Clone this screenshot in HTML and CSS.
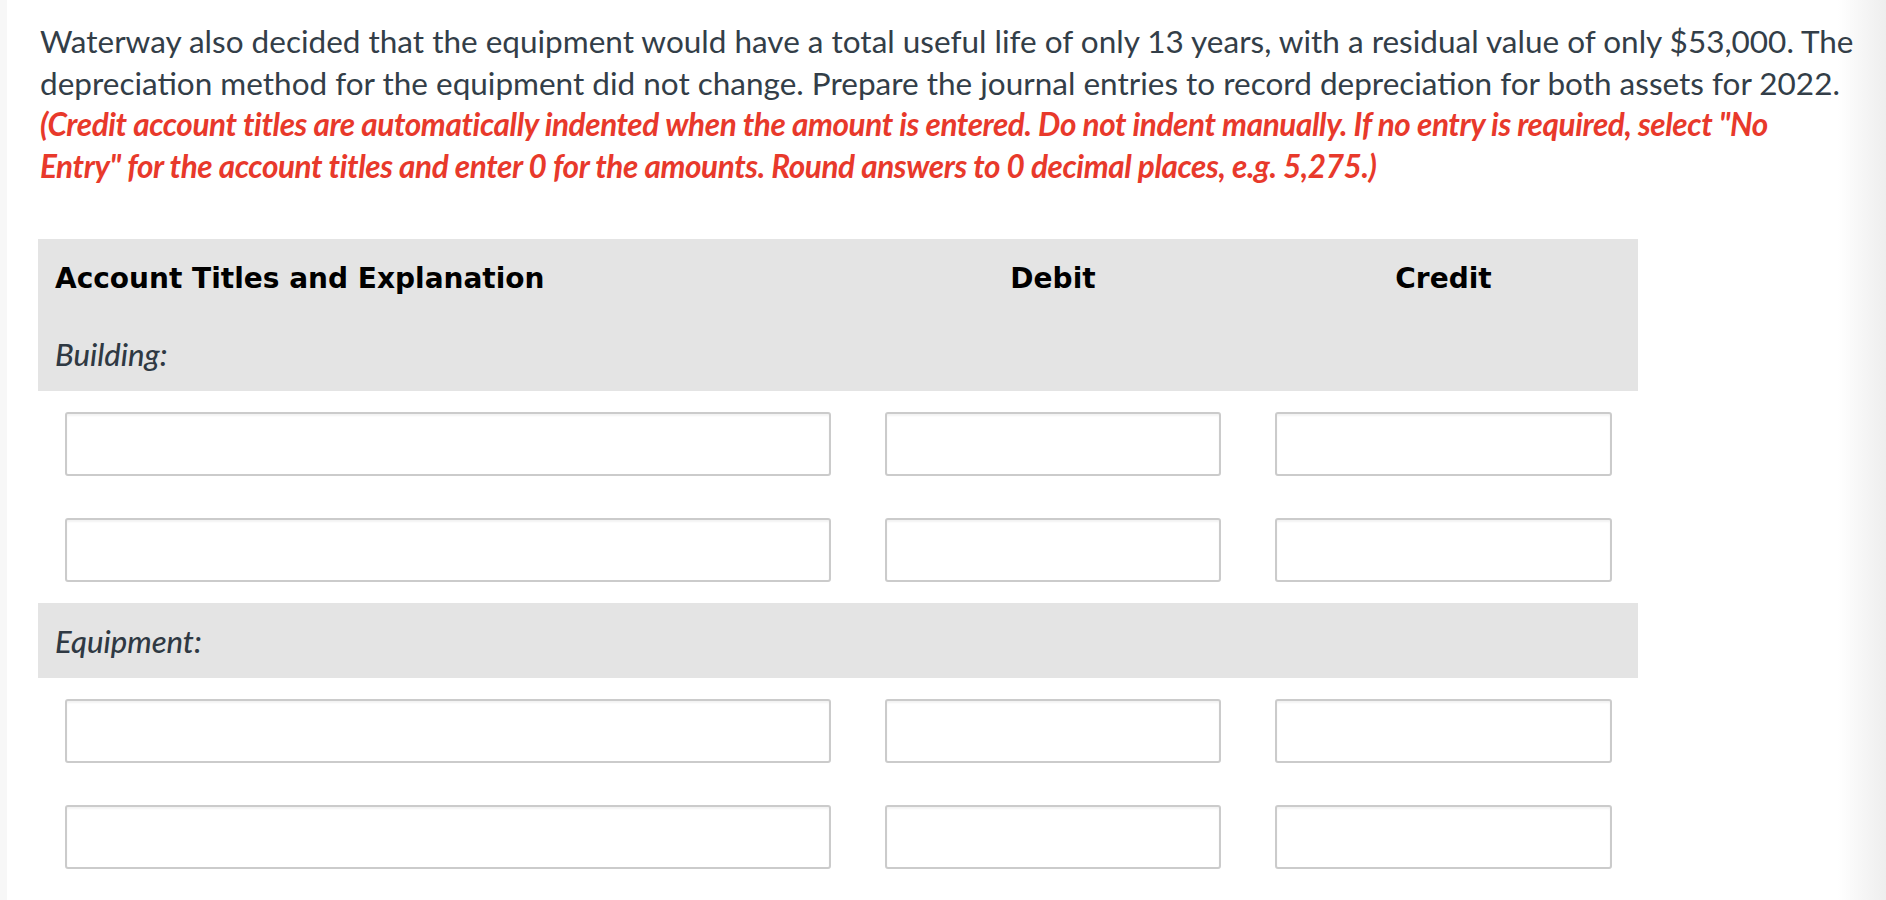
FILE: index.html
```html
<!DOCTYPE html>
<html lang="en">
<head>
<meta charset="utf-8">
<title>Journal Entries</title>
<link rel="stylesheet" href="styles.css">
</head>
<body>
<main class="page">
  <div class="prompt">
    <p class="question">Waterway also decided that the equipment would have a total useful life of only 13 years, with a residual value of only $53,000. The depreciation method for the equipment did not change. Prepare the journal entries to record depreciation for both assets for 2022.</p>
    <p class="instructions">(Credit account titles are automatically indented when the amount is entered. Do not indent manually. If no entry is required, select "No Entry" for the account titles and enter 0 for the amounts. Round answers to 0 decimal places, e.g. 5,275.)</p>
  </div>

  <section class="journal">
    <div class="band band-top">
      <div class="head-row">
        <div class="head-cell head-left">Account Titles and Explanation</div>
        <div class="head-cell">Debit</div>
        <div class="head-cell">Credit</div>
      </div>
      <div class="label-row">Building:</div>
    </div>
    <div class="entry-row">
      <input class="field" type="text">
      <input class="field" type="text">
      <input class="field" type="text">
    </div>
    <div class="entry-row">
      <input class="field" type="text">
      <input class="field" type="text">
      <input class="field" type="text">
    </div>
    <div class="band">
      <div class="label-row">Equipment:</div>
    </div>
    <div class="entry-row">
      <input class="field" type="text">
      <input class="field" type="text">
      <input class="field" type="text">
    </div>
    <div class="entry-row">
      <input class="field" type="text">
      <input class="field" type="text">
      <input class="field" type="text">
    </div>
  </section>
</main>
</body>
</html>
```

FILE: styles.css
```css
html, body {
  margin: 0;
  padding: 0;
}

body {
  width: 1886px;
  height: 900px;
  overflow: hidden;
  font-family: "Lato", "Liberation Sans", sans-serif;
  color: #333e48;
  background: linear-gradient(to right,
    #f7f7f7 0, #f7f7f7 7px,
    #ffffff 7px, #ffffff 1838px,
    #f6f6f6 1862px, #eeeeee 1886px);
}

.page {
  padding: 21px 0 0 40px;
}

.prompt p {
  margin: 0;
  font-size: 31.5px;
  line-height: 41.5px;
}

.question {
  width: 1826px;
}

.instructions {
  width: 1790px;
  color: #e8392b;
  font-weight: 700;
  font-style: italic;
  letter-spacing: -0.4px;
}

.journal {
  margin-top: 52px;
  margin-left: -2px;
  width: 1600px;
}

.band {
  background: #e4e4e4;
}

.head-row {
  display: grid;
  grid-template-columns: 776px 336px 337px;
  column-gap: 54px;
  padding: 2px 0 0 17px;
  height: 75px;
  align-items: center;
}

.head-cell {
  font-family: "DejaVu Sans", "Verdana", sans-serif;
  font-size: 28px;
  font-weight: 700;
  color: #000;
  text-align: center;
}

.head-cell.head-left {
  text-align: left;
}

.label-row {
  height: 75px;
  display: flex;
  align-items: center;
  padding: 1px 0 0 17px;
  box-sizing: border-box;
  font-size: 31px;
  font-style: italic;
  font-weight: 500;
  color: #2f3943;
}

.entry-row {
  display: grid;
  grid-template-columns: 766px 336px 337px;
  column-gap: 54px;
  padding: 21px 27px 21px 27px;
}

.field {
  box-sizing: border-box;
  height: 64px;
  width: 100%;
  margin: 0;
  border: 2px solid #cbcbcb;
  border-radius: 3px;
  background: #fff;
  box-shadow: inset 0 2px 2px rgba(0, 0, 0, 0.05);
  font-family: inherit;
  font-size: 28px;
  padding: 0 12px;
}
```
